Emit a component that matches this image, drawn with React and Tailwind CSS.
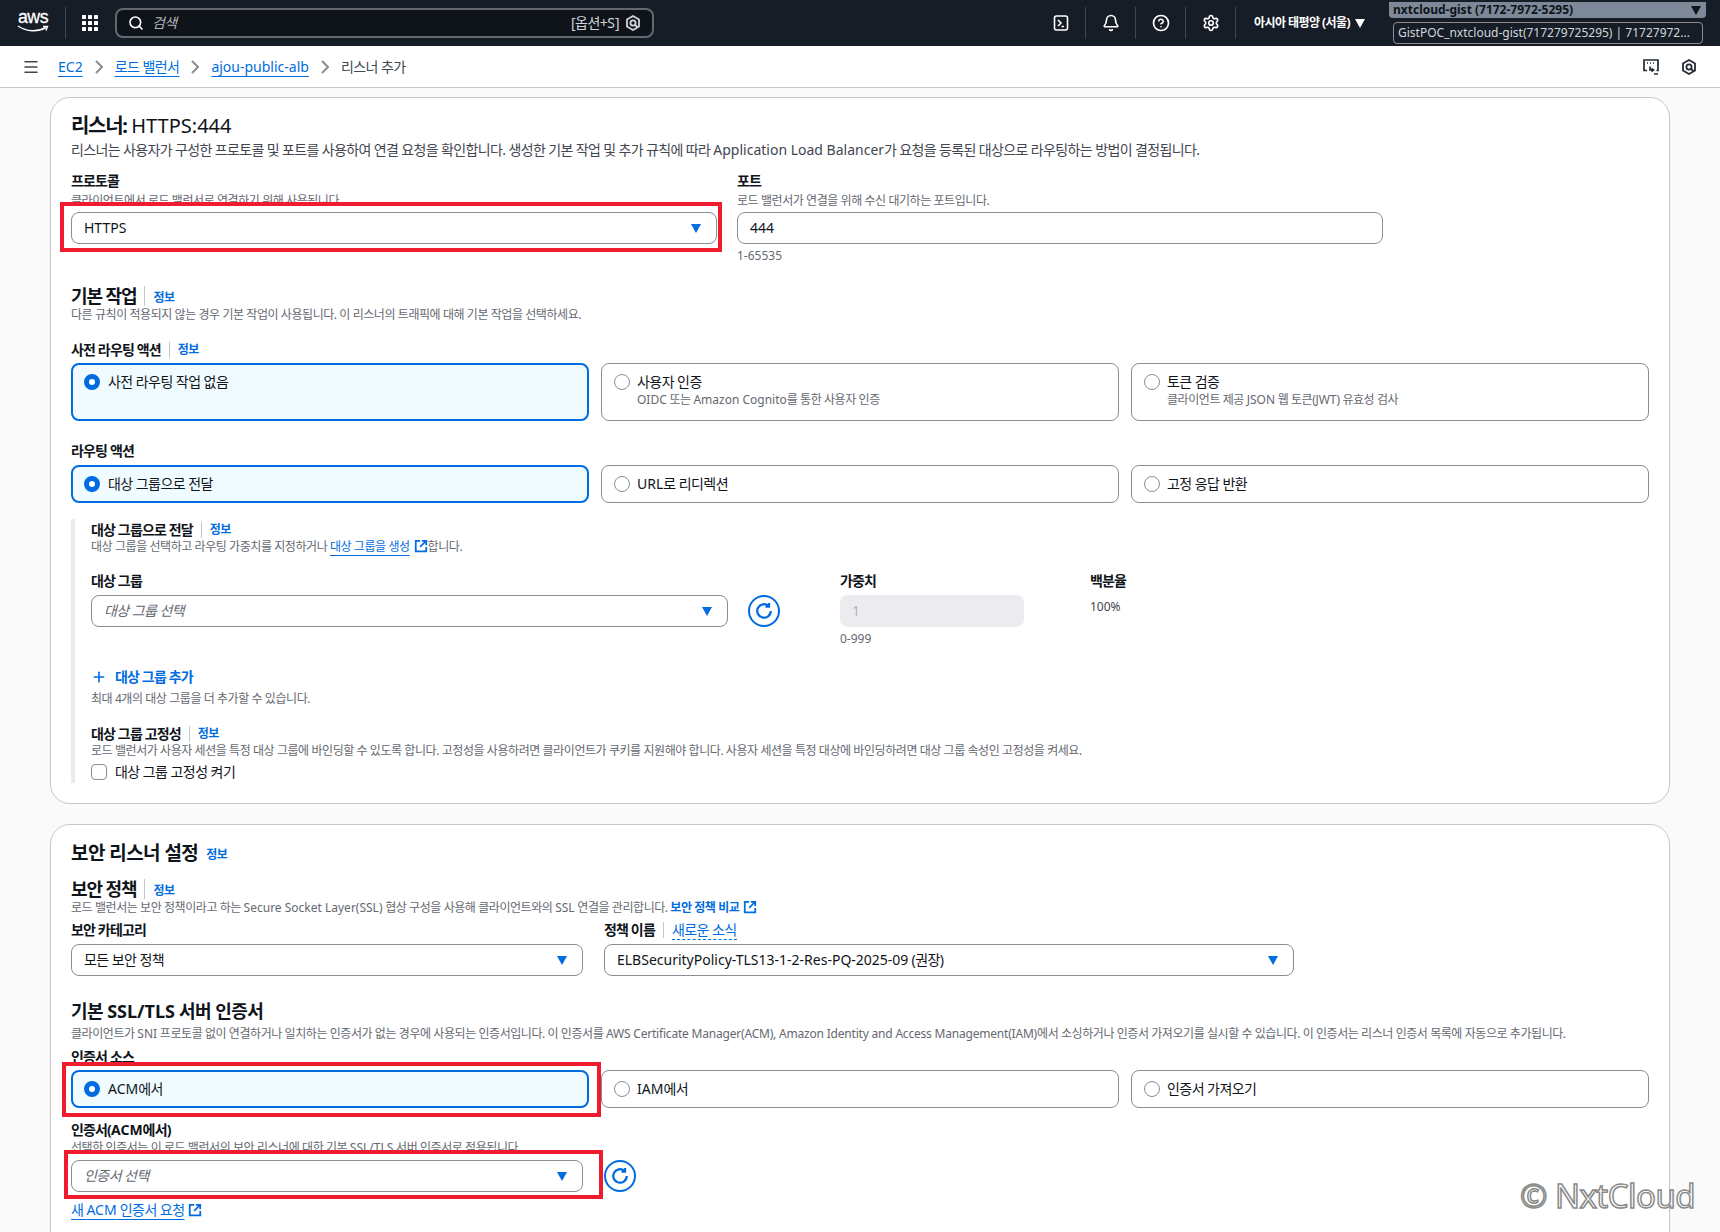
import React from 'react';
import { Bell, CircleHelp, Search, Settings, Menu, Plus } from 'lucide-react';

// Latin runs keep normal spacing, the root tightens the Korean text
const L = ({ children }) => <span className="tracking-normal">{children}</span>;

const Caret = ({ className = 'text-[#006ce0]' }) => (
  <svg viewBox="0 0 12 12" className={`h-3 w-3 shrink-0 ${className}`}>
    <path d="M1 2h10L6 11z" fill="currentColor" />
  </svg>
);

const External = () => (
  <svg viewBox="0 0 16 16" fill="none" stroke="#006ce0" strokeWidth="2" className="ml-1 inline-block h-3.5 w-3.5 align-[-2px]">
    <path d="M7 2H2v12h12V9M9 2h5v5M14 2 7 9" />
  </svg>
);

const Refresh = () => (
  <div className="flex h-8 w-8 shrink-0 items-center justify-center rounded-full border-2 border-[#006ce0]">
    <svg viewBox="0 0 16 16" fill="none" stroke="#006ce0" strokeWidth="2" className="h-[18px] w-[18px]">
      <path d="M14 8a6 6 0 1 1-2-4.500M12.500 0.800v3.200H9.300" />
    </svg>
  </div>
);

const Shield = ({ className = 'text-white' }) => (
  <svg viewBox="0 0 16 16" fill="none" stroke="currentColor" strokeWidth="1.8" className={`h-4 w-4 ${className}`}>
    <path d="M8 1l6 3.400v7.200L8 15l-6-3.400V4.400z" />
    <circle cx="8" cy="8" r="2.600" />
    <path d="M10 10l2.500 2" />
  </svg>
);

const Chevron = () => (
  <svg viewBox="0 0 8 14" fill="none" stroke="#8c8c94" strokeWidth="2" className="mx-3 h-[14px] w-2 shrink-0">
    <path d="M1 1l6 6-6 6" />
  </svg>
);

const Info = ({ className = '' }) => (
  <span className={`text-xs font-bold text-[#006ce0] ${className}`}>정보</span>
);

const Select = ({ value, placeholder, className = '' }) => (
  <div className={`flex h-8 items-center justify-between rounded-lg border border-[#8c8c94] bg-white pl-3 pr-3.5 text-sm ${className}`}>
    <span className={placeholder ? 'italic text-[#656871]' : 'text-[#0f141a]'}>{value}</span>
    <Caret />
  </div>
);

const Tile = ({ selected, title, desc, className = 'h-[38px]' }) => (
  <div className={`flex items-start rounded-lg ${className} ${selected ? 'gap-2 border-2 border-[#006ce0] bg-[#f0fbff] pl-[11px] pt-[7px]' : 'gap-[7px] border border-[#8c8c94] bg-white pl-3 pt-2'}`}>
    <span className={`mt-[2px] h-4 w-4 shrink-0 rounded-full ${selected ? 'border-[5px] border-[#006ce0] bg-white' : 'border border-[#8c8c94] bg-white'}`} />
    <div className="leading-5">
      <div className="text-sm text-[#0f141a]">{title}</div>
      {desc && <div className="text-xs leading-4 tracking-[-0.43px] text-[#656871]">{desc}</div>}
    </div>
  </div>
);

const HeaderIcon = ({ children }) => (
  <div className="flex h-8 w-[50px] items-center justify-center border-r border-[#424650] text-white">{children}</div>
);

const Annotation = ({ className }) => (
  <div className={`pointer-events-none absolute border-4 border-[#ee1c2e] ${className}`} />
);

const TopNav = () => (
  <header className="flex h-[46px] items-center bg-[#161d26] text-white">
    <div className="flex w-[65px] justify-center">
      <svg viewBox="0 0 32 24" className="h-6 w-8 overflow-visible">
        <text x="1" y="12" fill="#fff" stroke="#fff" strokeWidth="0.3" fontSize="19" textLength="30" lengthAdjust="spacingAndGlyphs" fontFamily="Liberation Sans, sans-serif">aws</text>
        <path d="M1 15c9 6 20 6 28 1.500" stroke="#fff" strokeWidth="1.500" fill="none" />
        <path d="M26 15.500l4.500 0-1.500 4" stroke="#fff" strokeWidth="1.400" fill="none" />
      </svg>
    </div>
    <div className="h-8 border-l border-[#424650]" />
    <svg viewBox="0 0 16 16" className="ml-4 h-4 w-4" fill="#fff">
      <rect x="0" y="0" width="4" height="4" rx="0.6" />
      <rect x="6" y="0" width="4" height="4" rx="0.6" />
      <rect x="12" y="0" width="4" height="4" rx="0.6" />
      <rect x="0" y="6" width="4" height="4" rx="0.6" />
      <rect x="6" y="6" width="4" height="4" rx="0.6" />
      <rect x="12" y="6" width="4" height="4" rx="0.6" />
      <rect x="0" y="12" width="4" height="4" rx="0.6" />
      <rect x="6" y="12" width="4" height="4" rx="0.6" />
      <rect x="12" y="12" width="4" height="4" rx="0.6" />
    </svg>
    <div className="ml-[17px] flex h-[30px] w-[539px] items-center rounded-lg border-2 border-[#656871] bg-[#0f141a] pl-[11px] pr-[11px]">
      <Search className="h-4 w-4" strokeWidth={2.4} />
      <span className="ml-2 flex-1 text-sm italic text-[#b4b4bb]">검색</span>
      <span className="text-sm text-[#d1d5db]">[옵션+<L>S</L>]</span>
      <Shield className="ml-[6px] text-[#d1d5db]" />
    </div>
    <div className="ml-auto flex items-center">
      <HeaderIcon>
        <svg viewBox="0 0 16 16" fill="none" stroke="currentColor" strokeWidth="1.600" className="h-4 w-4">
          <rect x="1.500" y="1" width="13" height="14" rx="2" />
          <path d="M5 5l3 3-3 3M8.500 11.500h2.500" />
        </svg>
      </HeaderIcon>
      <HeaderIcon><Bell className="h-[18px] w-[18px]" strokeWidth={2.2} /></HeaderIcon>
      <HeaderIcon><CircleHelp className="h-[18px] w-[18px]" strokeWidth={2.2} /></HeaderIcon>
      <HeaderIcon><Settings className="h-[18px] w-[18px]" strokeWidth={2.2} /></HeaderIcon>
      <div className="flex w-[153px] items-center gap-1 pl-[18px] text-xs font-bold">
        아시아 태평양 (서울)
        <Caret className="h-2 w-2 text-white" />
      </div>
      <div className="flex w-[331px] flex-col items-stretch self-start pr-[14px] tracking-normal">
        <div className="flex h-4 items-center justify-between rounded-b bg-[#7d8998] px-1 text-xs font-bold text-[#0f141a]">
          nxtcloud-gist (7172-7972-5295)
          <Caret className="h-2 w-2 text-[#0f141a]" />
        </div>
        <div className="ml-1 mr-[3px] mt-1 h-[22px] whitespace-nowrap rounded border border-[#8c8c94] px-1 text-xs leading-[19px] text-[#d1d5db]">
          GistPOC_nxtcloud-gist(717279725295) | 71727972...
        </div>
      </div>
    </div>
  </header>
);

const Breadcrumbs = () => (
  <div className="flex h-[42px] items-center border-b border-[#c6c6cd] bg-white pl-[22px] pr-[23px]">
    <Menu className="h-[18px] w-[18px] text-[#424650]" strokeWidth={2} />
    <div className="ml-[18px] flex items-center text-sm">
      <span className="tracking-normal text-[#006ce0] underline underline-offset-4">EC2</span>
      <Chevron />
      <span className="text-[#006ce0] underline underline-offset-4">로드 밸런서</span>
      <Chevron />
      <span className="tracking-normal text-[#006ce0] underline underline-offset-4">ajou-public-alb</span>
      <Chevron />
      <span className="text-[#424650]">리스너 추가</span>
    </div>
    <div className="ml-auto flex items-center gap-[22px] text-[#232b37]">
      <svg viewBox="0 0 16 16" fill="none" stroke="currentColor" strokeWidth="1.700" className="h-4 w-4">
        <path d="M4 11.500H1V1h14v10.500h-1.500" />
        <path d="M4 4h1M7 4h1M10 4h1" />
        <path d="M7 7.500v3.500h3M8.500 9.500l2 1.500-2 1.500M11 15h4" />
      </svg>
      <Shield className="text-[#232b37]" />
    </div>
  </div>
);

export default function App() {
  return (
    <div className="relative h-[1232px] overflow-hidden bg-[#fafafa] font-['Noto_Sans','Noto_Sans_CJK_KR',sans-serif] tracking-[-0.55px] text-[#0f141a]">
      <TopNav />
      <Breadcrumbs />

      <main className="pl-[50px] pr-[50px] pt-[9px]">
        {/* 리스너 카드 */}
        <section className="h-[707px] rounded-[20px] border border-[#c6c6cd] bg-white pl-5 pr-5 pt-[14px]">
          <h2 className="text-xl leading-7"><b className="tracking-[-1.3px]">리스너:</b> <L>HTTPS:444</L></h2>
          <p className="text-sm leading-5 tracking-[-0.63px] text-[#424650]">리스너는 사용자가 구성한 프로토콜 및 포트를 사용하여 연결 요청을 확인합니다. 생성한 기본 작업 및 추가 규칙에 따라 <L>Application Load Balancer</L>가 요청을 등록된 대상으로 라우팅하는 방법이 결정됩니다.</p>

          <div className="mt-[11px] flex gap-5">
            <div className="w-[646px]">
              <div className="text-sm font-bold leading-5 tracking-[-0.85px]">프로토콜</div>
              <div className="mt-[2px] text-xs leading-4 tracking-[-0.43px] text-[#656871]">클라이언트에서 로드 밸런서로 연결하기 위해 사용됩니다.</div>
              <Select value={<L>HTTPS</L>} className="mt-[3px]" />
            </div>
            <div className="w-[646px]">
              <div className="text-sm font-bold leading-5 tracking-[-0.85px]">포트</div>
              <div className="mt-[2px] text-xs leading-4 tracking-[-0.43px] text-[#656871]">로드 밸런서가 연결을 위해 수신 대기하는 포트입니다.</div>
              <div className="mt-[3px] flex h-8 items-center rounded-lg border border-[#8c8c94] bg-white px-3 text-sm tracking-normal">444</div>
              <div className="mt-1 text-xs leading-4 tracking-normal text-[#656871]">1-65535</div>
            </div>
          </div>

          <div className="mt-5 flex items-center gap-2">
            <h3 className="text-lg font-bold leading-6 tracking-[-1.1px]">기본 작업</h3>
            <span className="h-5 border-l border-[#c6c6cd]" />
            <Info className="mt-1" />
          </div>
          <p className="-mt-px text-xs leading-4 tracking-[-0.43px] text-[#656871]">다른 규칙이 적용되지 않는 경우 기본 작업이 사용됩니다. 이 리스너의 트래픽에 대해 기본 작업을 선택하세요.</p>

          <div className="mt-[17px] flex items-center gap-2 leading-5">
            <span className="text-sm font-bold tracking-[-0.85px]">사전 라우팅 액션</span>
            <span className="h-4 border-l border-[#c6c6cd]" />
            <Info />
          </div>
          <div className="mt-[3px] grid w-[1578px] grid-cols-3 gap-3">
            <Tile selected title="사전 라우팅 작업 없음" className="h-[58px]" />
            <Tile title="사용자 인증" desc={<><L>OIDC</L> 또는 <L>Amazon Cognito</L>를 통한 사용자 인증</>} className="h-[58px]" />
            <Tile title="토큰 검증" desc={<>클라이언트 제공 <L>JSON</L> 웹 토큰(<L>JWT</L>) 유효성 검사</>} className="h-[58px]" />
          </div>

          <div className="mt-5 text-sm font-bold leading-5 tracking-[-0.85px]">라우팅 액션</div>
          <div className="mt-1 grid w-[1578px] grid-cols-3 gap-3">
            <Tile selected title="대상 그룹으로 전달" />
            <Tile title={<><L>URL</L>로 리디렉션</>} />
            <Tile title="고정 응답 반환" />
          </div>

          <div className="mt-4 h-[264px] border-l-4 border-[#e9ebed] pl-4">
            <div className="flex items-center gap-2 pt-px leading-5">
              <span className="text-sm font-bold tracking-[-0.85px]">대상 그룹으로 전달</span>
              <span className="h-4 border-l border-[#c6c6cd]" />
              <Info />
            </div>
            <p className="-mt-px text-xs leading-4 tracking-[-0.43px] text-[#656871]">대상 그룹을 선택하고 라우팅 가중치를 지정하거나 <span className="text-[#006ce0] underline underline-offset-4">대상 그룹을 생성</span><External />합니다.</p>

            <div className="mt-4 flex">
              <div className="w-[637px]">
                <div className="text-sm font-bold leading-5 tracking-[-0.85px]">대상 그룹</div>
                <Select value="대상 그룹 선택" placeholder className="mt-1" />
              </div>
              <div className="ml-5 mt-6"><Refresh /></div>
              <div className="ml-[60px] w-[184px]">
                <div className="text-sm font-bold leading-5 tracking-[-0.85px]">가중치</div>
                <div className="mt-1 flex h-8 items-center rounded-lg bg-[#ebebf0] px-3 text-sm text-[#b4b4bb]">1</div>
                <div className="mt-1 text-xs leading-4 tracking-normal text-[#656871]">0-999</div>
              </div>
              <div className="ml-[66px]">
                <div className="text-sm font-bold leading-5 tracking-[-0.85px]">백분율</div>
                <div className="mt-[6px] text-xs leading-5 tracking-normal text-[#424650]">100%</div>
              </div>
            </div>

            <div className="mt-5 flex items-center text-sm font-bold leading-5 tracking-[-0.85px] text-[#006ce0]">
              <Plus className="mr-2 h-4 w-4" strokeWidth={2.5} />
              대상 그룹 추가
            </div>
            <p className="mt-1 text-xs leading-4 tracking-[-0.43px] text-[#656871]">최대 4개의 대상 그룹을 더 추가할 수 있습니다.</p>

            <div className="mt-[17px] flex items-center gap-2 leading-5">
              <span className="text-sm font-bold tracking-[-0.85px]">대상 그룹 고정성</span>
              <span className="h-4 border-l border-[#c6c6cd]" />
              <Info />
            </div>
            <p className="-mt-px text-xs leading-4 tracking-[-0.43px] text-[#656871]">로드 밸런서가 사용자 세션을 특정 대상 그룹에 바인딩할 수 있도록 합니다. 고정성을 사용하려면 클라이언트가 쿠키를 지원해야 합니다. 사용자 세션을 특정 대상에 바인딩하려면 대상 그룹 속성인 고정성을 켜세요.</p>
            <div className="mt-[3px] flex items-center gap-2 text-sm leading-5">
              <span className="h-4 w-4 rounded border border-[#8c8c94] bg-white" />
              대상 그룹 고정성 켜기
            </div>
          </div>
        </section>

        {/* 보안 리스너 카드 */}
        <section className="mt-5 h-[500px] rounded-[20px] border border-[#c6c6cd] bg-white pl-5 pr-5 pt-4">
          <div className="flex items-center gap-2">
            <h2 className="text-[19px] font-bold leading-6">보안 리스너 설정</h2>
            <Info className="mt-1" />
          </div>
          <div className="mt-3 flex items-center gap-2">
            <h3 className="text-lg font-bold leading-6 tracking-[-1.1px]">보안 정책</h3>
            <span className="h-5 border-l border-[#c6c6cd]" />
            <Info className="mt-1" />
          </div>
          <p className="-mt-px text-xs leading-4 tracking-[-0.43px] text-[#656871]">로드 밸런서는 보안 정책이라고 하는 <L>Secure Socket Layer(SSL)</L> 협상 구성을 사용해 클라이언트와의 <L>SSL</L> 연결을 관리합니다. <span className="font-bold text-[#006ce0]">보안 정책 비교</span><External /></p>

          <div className="mt-1 flex gap-[21px]">
            <div className="w-[512px]">
              <div className="text-sm font-bold leading-5 tracking-[-0.85px]">보안 카테고리</div>
              <Select value="모든 보안 정책" className="mt-1" />
            </div>
            <div className="w-[690px]">
              <div className="flex items-center gap-2 leading-5">
                <span className="text-sm font-bold tracking-[-0.85px]">정책 이름</span>
                <span className="h-4 border-l border-[#c6c6cd]" />
                <span className="border-b border-dashed border-[#006ce0] text-sm leading-[18px] text-[#006ce0]">새로운 소식</span>
              </div>
              <Select value={<><L>ELBSecurityPolicy-TLS13-1-2-Res-PQ-2025-09</L> (권장)</>} className="mt-1" />
            </div>
          </div>

          <h3 className="mt-[23px] text-lg font-bold leading-6">기본 <L>SSL/TLS</L> 서버 인증서</h3>
          <p className="mt-[3px] text-xs leading-4 tracking-[-0.43px] text-[#656871]">클라이언트가 <L>SNI</L> 프로토콜 없이 연결하거나 일치하는 인증서가 없는 경우에 사용되는 인증서입니다. 이 인증서를 <span className="tracking-[-0.2px]">AWS Certificate Manager(ACM), Amazon Identity and Access Management(IAM)</span>에서 소싱하거나 인증서 가져오기를 실시할 수 있습니다. 이 인증서는 리스너 인증서 목록에 자동으로 추가됩니다.</p>

          <div className="mt-[5px] text-sm font-bold leading-5 tracking-[-0.85px]">인증서 소스</div>
          <div className="mt-[3px] grid w-[1578px] grid-cols-3 gap-3">
            <Tile selected title={<><L>ACM</L>에서</>} />
            <Tile title={<><L>IAM</L>에서</>} />
            <Tile title="인증서 가져오기" />
          </div>

          <div className="mt-3 text-sm font-bold leading-5 tracking-[-0.85px]">인증서(<L>ACM</L>에서)</div>
          <div className="text-xs leading-4 tracking-[-0.43px] text-[#656871]">선택한 인증서는 이 로드 밸런서의 보안 리스너에 대한 기본 <L>SSL/TLS</L> 서버 인증서로 적용됩니다.</div>
          <div className="mt-1 flex items-center gap-[21px]">
            <Select value="인증서 선택" placeholder className="w-[512px]" />
            <Refresh />
          </div>
          <div className="mt-2 text-sm leading-5 text-[#006ce0]"><span className="underline underline-offset-4">새 <L>ACM</L> 인증서 요청</span><External /></div>
        </section>
      </main>

      {/* 캡처에 표시된 강조 상자 */}
      <Annotation className="left-[60px] top-[202px] h-[50px] w-[662px]" />
      <Annotation className="left-[62px] top-[1062px] h-[55px] w-[539px]" />
      <Annotation className="left-[64px] top-[1150px] h-[49px] w-[539px]" />

      <div className="absolute right-[25px] top-[1176px] text-[33px] leading-10 text-white [-webkit-text-stroke:1.5px_#8a8a8a]">© NxtCloud</div>
    </div>
  );
}
